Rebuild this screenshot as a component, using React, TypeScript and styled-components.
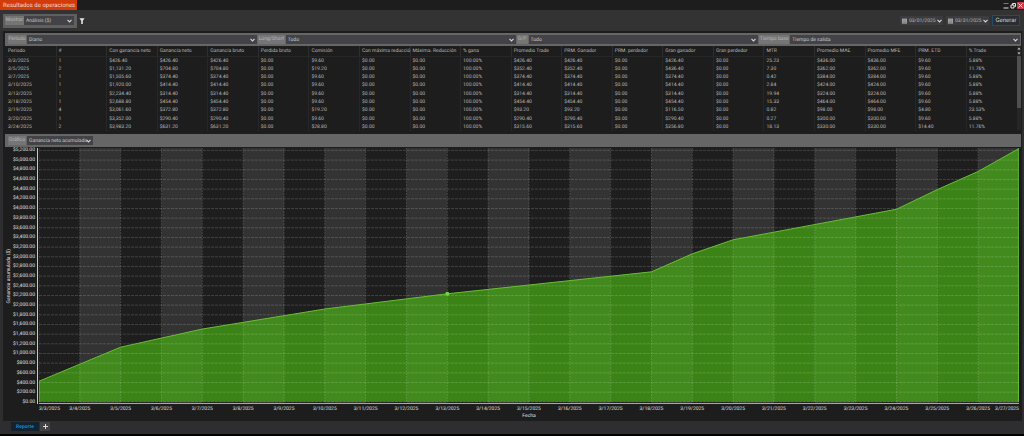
import React from "react";
import styled, { createGlobalStyle } from "styled-components";

const GlobalStyle = createGlobalStyle`
  * { box-sizing: border-box; }
  body {
    margin: 0;
    background: #000;
    color: #c4c4c4;
    font-family: Roboto, "Open Sans", sans-serif;
    font-size: 5px;
    line-height: 8px;
    text-rendering: geometricPrecision;
  }
  button, input, select { font: inherit; color: inherit; margin: 0; text-rendering: inherit; }
`;

const Window = styled.div`
  display: flex;
  flex-direction: column;
  min-height: 100vh;
  border-bottom: 2px solid #000;
  background: #2e2e30;
`;

const TitleBar = styled.header`
  display: flex;
  justify-content: space-between;
  height: 10px;
  background: #1d1d1d;
`;

const Title = styled.h1`
  margin: 0;
  padding: 0 3px;
  width: 77px;
  background: #d43b0b;
  color: #f3d9cf;
  font-size: 6px;
  font-weight: 400;
  line-height: 11px;
  white-space: nowrap;
`;

const WindowButtons = styled.div`
  display: flex;
  align-items: flex-end;
  padding-bottom: 1px;
`;

const WindowButton = styled.button<{ $close?: boolean }>`
  display: flex;
  align-items: center;
  justify-content: center;
  width: 7px;
  height: 7px;
  padding: 0;
  border: 0;
  background: ${(p) => (p.$close ? "#c63a4a" : "transparent")};
  color: #e6e6e6;
`;

const Toolbar = styled.div`
  display: flex;
  align-items: center;
  height: 21px;
  padding: 0 4px 0 3px;
  background: #333;
`;

const ShowBox = styled.div`
  display: flex;
  align-items: center;
  height: 14px;
  width: 74px;
  padding: 0 3px 0 2px;
  background: #5f5f5f;
`;

const Spacer = styled.div`
  flex: 1;
`;

const IconButton = styled.button`
  display: flex;
  margin-left: 2px;
  padding: 0;
  border: 0;
  background: none;
  color: #e4e4e4;
`;

const DateBox = styled.label`
  display: flex;
  align-items: center;
  gap: 1px;
  width: 43px;
  height: 9px;
  margin-right: 3px;
  padding: 0 1px 0 2px;
  background: #3c3c3f;
  color: #bdbdbd;

  > svg { flex: none; }
`;

const DateInput = styled.input`
  flex: 1;
  min-width: 0;
  height: 8px;
  padding: 0 0 0 1px;
  border: 0;
  background: none;
`;

const GenerateButton = styled.button`
  width: 28px;
  height: 11px;
  padding: 0;
  border: 1px solid #214c70;
  background: #2a2d31;
  color: #d0d0d0;
  font-size: 6px;
  line-height: 8px;
`;

const Panel = styled.main`
  display: flex;
  flex: 1;
  flex-direction: column;
  margin: 0 2px 0 3px;
  padding: 2px 1px 0 2px;
  background: #1d1d1d;
`;

const FilterBar = styled.div`
  display: flex;
  align-items: center;
  gap: 1px;
  height: 13px;
  padding: 0 1px 0 3px;
  background: #666;
`;

const FieldLabel = styled.label<{ $width: number }>`
  flex: 0 0 ${(p) => p.$width}px;
  height: 9px;
  background: #757575;
  color: #b8b8b8;
  line-height: 9px;
  text-align: center;
  white-space: nowrap;
`;

const SelectWrap = styled.div<{ $width?: number }>`
  display: grid;
  align-items: center;
  flex: ${(p) => (p.$width ? `0 0 ${p.$width}px` : "1")};
  height: 9px;
  background: #434347;

  > * { grid-area: 1 / 1; }
  > svg { justify-self: end; margin-right: 2px; pointer-events: none; }
`;

const Select = styled.select`
  appearance: none;
  width: 100%;
  height: 9px;
  padding: 0 0 0 2px;
  border: 0;
  background: none;
  color: #c8c8c8;
  line-height: 8px;
`;

const TableArea = styled.section`
  display: grid;
  grid-template-columns: 1fr 4px;
  height: 88px;
`;

const Table = styled.table`
  width: 100%;
  height: 85px;
  table-layout: fixed;
  border-collapse: collapse;
`;

const HeadCell = styled.th`
  height: 10px;
  padding: 0 0 0 2px;
  border-left: 1px solid #2d2d2d;
  border-bottom: 1px solid #272727;
  color: #b4b4b4;
  font-weight: 400;
  text-align: left;
  white-space: nowrap;

  &:first-child { border-left-color: transparent; }
`;

const Cell = styled.td`
  padding: 0 0 0 2px;
  border-left: 1px solid #272727;
  color: #bcbcbc;

  &:first-child { border-left-color: transparent; }
`;

const Scrollbar = styled.div`
  display: flex;
  flex-direction: column;
  align-items: center;
  width: 4px;
  height: 84px;
  padding-top: 1px;
  background: #262626;
  color: #d0d0d0;
`;

const Thumb = styled.div`
  width: 4px;
  height: 52px;
  margin-top: 1px;
  background: #505050;
`;

const Chart = styled.section`
  display: grid;
  flex: 1;
  grid-template-columns: 8px 22px 4px 1fr;
  grid-template-rows: 1fr 17px;
  padding: 1px 2px 0 0;
  color: #e0e0e0;
`;

const AxisTitle = styled.div`
  align-self: center;
  writing-mode: vertical-rl;
  transform: rotate(180deg);
  line-height: 8px;
  white-space: nowrap;
`;

const YLabels = styled.div`
  display: flex;
  flex-direction: column;
  justify-content: space-between;
  padding: 2px 0;
`;

const YLabel = styled.span`
  display: flex;
  align-items: center;
  justify-content: flex-end;
  height: 0;
`;

const YAxis = styled.div`
  margin-left: 2px;
  border-left: 1px solid #c8c8c8;
`;

const Plot = styled.div`
  display: grid;
  min-height: 200px;
  border-bottom: 1px solid #a8a8a8;

  > svg { contain: size; width: 100%; height: 100%; }
`;

const XAxis = styled.div`
  grid-column: 4;
`;

const XLabels = styled.div`
  display: flex;
  justify-content: space-between;
  height: 8px;
  margin-top: 1px;
`;

const XLabel = styled.span`
  display: flex;
  justify-content: center;
  width: 0;
  white-space: nowrap;

  &:first-child { justify-content: flex-start; }
  &:last-child { justify-content: flex-end; }
`;

const XTitle = styled.div`
  height: 6px;
  line-height: 6px;
  text-align: center;
`;

const Tabs = styled.nav`
  display: flex;
  gap: 1px;
  height: 13px;
  padding: 1px 0 0 11px;
`;

const Tab = styled.button`
  width: 28px;
  height: 9px;
  padding: 0;
  border: 0;
  background: #12222f;
  color: #1483d8;
  font-weight: 700;
`;

const AddTab = styled.button`
  display: flex;
  align-items: center;
  justify-content: center;
  width: 10px;
  height: 9px;
  padding: 0;
  border: 0;
  background: #424245;
  color: #ddd;
`;

const Chevron = () => (
  <svg width="5" height="4" viewBox="0 0 5 4" fill="none" stroke="#d8d8d8" strokeWidth="1.1">
    <path d="M0.5 0.8 2.5 2.9 4.5 0.8" />
  </svg>
);

const Calendar = () => (
  <svg width="5" height="6" viewBox="0 0 5 6">
    <path d="M0 0.6h5v5H0z" fill="#a8a8a8" />
    <path d="M0.6 2h3.8M0.6 3.3h3.8M0.6 4.5h3.8" stroke="#555" strokeWidth="0.4" />
  </svg>
);

type DropProps = { id: string; label: string; labelWidth: number; value: string; width?: number };

const Drop = ({ id, label, labelWidth, value, width }: DropProps) => (
  <>
    <FieldLabel htmlFor={id} $width={labelWidth}>{label}</FieldLabel>
    <SelectWrap $width={width}>
      <Select id={id} defaultValue={value}>
        <option>{value}</option>
      </Select>
      <Chevron />
    </SelectWrap>
  </>
);

const DateField = ({ label, value }: { label: string; value: string }) => (
  <DateBox>
    <Calendar />
    <DateInput aria-label={label} defaultValue={value} />
    <Chevron />
  </DateBox>
);

const columns = [
  "Periodo", "#", "Con ganancia neto", "Ganancia neto", "Ganancia bruto", "Perdida bruto", "Comisión",
  "Con máxima reducció", "Máxima. Reducción", "% gana", "Promedio Trade", "PRM. Ganador", "PRM. perdedor",
  "Gran ganador", "Gran perdedor", "MTR", "Promedio MAE", "Promedio MFE", "PRM. ETD", "% Trade",
];

type Row = {
  date: string; count: number; total: string; net: string; fee: string; avg: string; best: string;
  mtr: string; excursion: string; etd: string; share: string;
};

const rows: Row[] = [
  { date: "3/3/2025", count: 1, total: "$426.40", net: "$426.40", fee: "$9.60", avg: "$426.40", best: "$426.40", mtr: "25.23", excursion: "$436.00", etd: "$9.60", share: "5.88%" },
  { date: "3/5/2025", count: 2, total: "$1,131.20", net: "$704.80", fee: "$19.20", avg: "$352.40", best: "$436.40", mtr: "7.30", excursion: "$362.00", etd: "$9.60", share: "11.76%" },
  { date: "3/7/2025", count: 1, total: "$1,505.60", net: "$374.40", fee: "$9.60", avg: "$374.40", best: "$374.40", mtr: "0.42", excursion: "$384.00", etd: "$9.60", share: "5.88%" },
  { date: "3/10/2025", count: 1, total: "$1,920.00", net: "$414.40", fee: "$9.60", avg: "$414.40", best: "$414.40", mtr: "2.84", excursion: "$424.00", etd: "$9.60", share: "5.88%" },
  { date: "3/13/2025", count: 1, total: "$2,234.40", net: "$314.40", fee: "$9.60", avg: "$314.40", best: "$314.40", mtr: "19.94", excursion: "$324.00", etd: "$9.60", share: "5.88%" },
  { date: "3/18/2025", count: 1, total: "$2,688.80", net: "$454.40", fee: "$9.60", avg: "$454.40", best: "$454.40", mtr: "15.33", excursion: "$464.00", etd: "$9.60", share: "5.88%" },
  { date: "3/19/2025", count: 4, total: "$3,061.60", net: "$372.80", fee: "$19.20", avg: "$93.20", best: "$116.50", mtr: "0.82", excursion: "$98.00", etd: "$4.80", share: "23.53%" },
  { date: "3/20/2025", count: 1, total: "$3,352.00", net: "$290.40", fee: "$9.60", avg: "$290.40", best: "$290.40", mtr: "0.27", excursion: "$300.00", etd: "$9.60", share: "5.88%" },
  { date: "3/24/2025", count: 2, total: "$3,983.20", net: "$631.20", fee: "$28.80", avg: "$315.60", best: "$356.80", mtr: "18.13", excursion: "$330.00", etd: "$14.40", share: "11.76%" },
];

const cellsOf = (r: Row) => [
  r.date, r.count, r.total, r.net, r.net, "$0.00", r.fee, "$0.00", "$0.00", "100.00%", r.avg, r.avg,
  "$0.00", r.best, "$0.00", r.mtr, r.excursion, r.excursion, r.etd, r.share,
];

// Cumulative net profit by day of March 2025.
const series: [number, number][] = [
  [3, 426.4], [5, 1131.2], [7, 1505.6], [10, 1920], [13, 2234.4], [18, 2688.8], [19, 3061.6],
  [20, 3352], [24, 3983.2], [25, 4390], [26, 4765], [27, 5240],
];

const WIDTH = 980;
const HEIGHT = 255;
const TOP = 5250;
const FLOOR = -24;
const days = Array.from({ length: 25 }, (_, i) => i + 3);
const ticks = Array.from({ length: 27 }, (_, i) => (26 - i) * 200);
const px = (day: number) => ((day - 3) / 24) * WIDTH;
const py = (value: number) => ((TOP - value) / (TOP - FLOOR)) * HEIGHT;
const money = (v: number) => "$" + v.toLocaleString("en-US", { minimumFractionDigits: 2 });

const ProfitPlot = () => {
  const line = series.map(([d, v]) => `${px(d)},${py(v)}`).join(" ");
  return (
    <svg viewBox={`0 0 ${WIDTH} ${HEIGHT}`} preserveAspectRatio="none" role="img" aria-label="Ganancia neto acumulado">
      {days.slice(0, -1).map((d) => (
        <rect key={d} x={px(d)} y="0" width={px(4)} height={HEIGHT} fill={d % 2 ? "#1e1e1e" : "#333"} />
      ))}
      <polygon points={`0,${py(0)} ${line} ${WIDTH},${py(0)}`} fill="#4cb814" fillOpacity="0.66" />
      {ticks.map((t) => (
        <path key={t} d={`M0 ${py(t)}H${WIDTH}`} stroke="#fff" strokeOpacity="0.16" strokeDasharray="3 1" vectorEffect="non-scaling-stroke" />
      ))}
      {days.map((d) => (
        <path key={d} d={`M${px(d)} 0V${HEIGHT}`} stroke="#fff" strokeOpacity="0.14" strokeDasharray="2 1" vectorEffect="non-scaling-stroke" />
      ))}
      <polyline points={`0,${py(0)} ${line} 979.5,${py(0)}`} fill="none" stroke="#69bd35" vectorEffect="non-scaling-stroke" />
      <circle cx={px(13)} cy={py(2234.4)} r="2" fill="#6bdc3a" />
    </svg>
  );
};

export default function App() {
  return (
    <>
      <GlobalStyle />
      <Window>
        <TitleBar>
          <Title>Resultados de operaciones</Title>
          <WindowButtons>
            <WindowButton aria-label="Minimizar">
              <svg width="7" height="7" viewBox="0 0 7 7"><path d="M0.5 1.5h5" stroke="#777" /><path d="M0.5 6h5" stroke="currentColor" /></svg>
            </WindowButton>
            <WindowButton aria-label="Restaurar">
              <svg width="7" height="7" viewBox="0 0 7 7" fill="none" stroke="currentColor"><path d="M2.5 3V1.5h3V4.5H4.5M1 3h3v3H1z" /></svg>
            </WindowButton>
            <WindowButton $close aria-label="Cerrar">
              <svg width="5" height="5" viewBox="0 0 5 5" stroke="currentColor"><path d="M0.5 0.5l4 4M4.5 0.5l-4 4" /></svg>
            </WindowButton>
          </WindowButtons>
        </TitleBar>
        <Toolbar>
          <ShowBox>
            <Drop id="show" label="Mostrar" labelWidth={19} value="Análisis ($)" width={50} />
          </ShowBox>
          <IconButton aria-label="Filtrar">
            <svg width="6" height="6" viewBox="0 0 6 6"><path d="M0.4 0.2h5.2L3.8 2.8V6H2.2V2.8z" fill="currentColor" /></svg>
          </IconButton>
          <Spacer />
          <DateField label="Desde" value="03/01/2025" />
          <DateField label="Hasta" value="03/31/2025" />
          <GenerateButton>Generar</GenerateButton>
        </Toolbar>
        <Panel>
          <FilterBar>
            <Drop id="period" label="Periodo" labelWidth={18} value="Diario" />
            <Drop id="side" label="Long/Short" labelWidth={27} value="Todo" />
            <Drop id="result" label="G/P" labelWidth={11} value="Todo" />
            <Drop id="time" label="Tiempo base" labelWidth={30} value="Tiempo de salida" />
          </FilterBar>
          <TableArea>
            <Table>
              <thead>
                <tr>{columns.map((c) => <HeadCell key={c}>{c}</HeadCell>)}</tr>
              </thead>
              <tbody>
                {rows.map((r) => (
                  <tr key={r.date}>{cellsOf(r).map((c, i) => <Cell key={i}>{c}</Cell>)}</tr>
                ))}
              </tbody>
            </Table>
            <Scrollbar>
              <svg width="4" height="8" viewBox="0 0 4 8" fill="currentColor"><path d="M2 0.5 3.5 2.5h-3zM2 7.5 3.5 5.5h-3z" /></svg>
              <Thumb />
            </Scrollbar>
          </TableArea>
          <FilterBar>
            <Drop id="graph" label="Gráfico" labelWidth={18} value="Ganancia neto acumulado" width={66} />
          </FilterBar>
          <Chart>
            <AxisTitle>Ganancia acumulada ($)</AxisTitle>
            <YLabels>{ticks.map((t) => <YLabel key={t}>{money(t)}</YLabel>)}</YLabels>
            <YAxis />
            <Plot><ProfitPlot /></Plot>
            <XAxis>
              <XLabels>{days.map((d) => <XLabel key={d}>{`3/${d}/2025`}</XLabel>)}</XLabels>
              <XTitle>Fecha</XTitle>
            </XAxis>
          </Chart>
        </Panel>
        <Tabs>
          <Tab>Reporte</Tab>
          <AddTab aria-label="Nuevo reporte">
            <svg width="5" height="5" viewBox="0 0 5 5" stroke="currentColor"><path d="M2.5 0v5M0 2.5h5" /></svg>
          </AddTab>
        </Tabs>
      </Window>
    </>
  );
}
